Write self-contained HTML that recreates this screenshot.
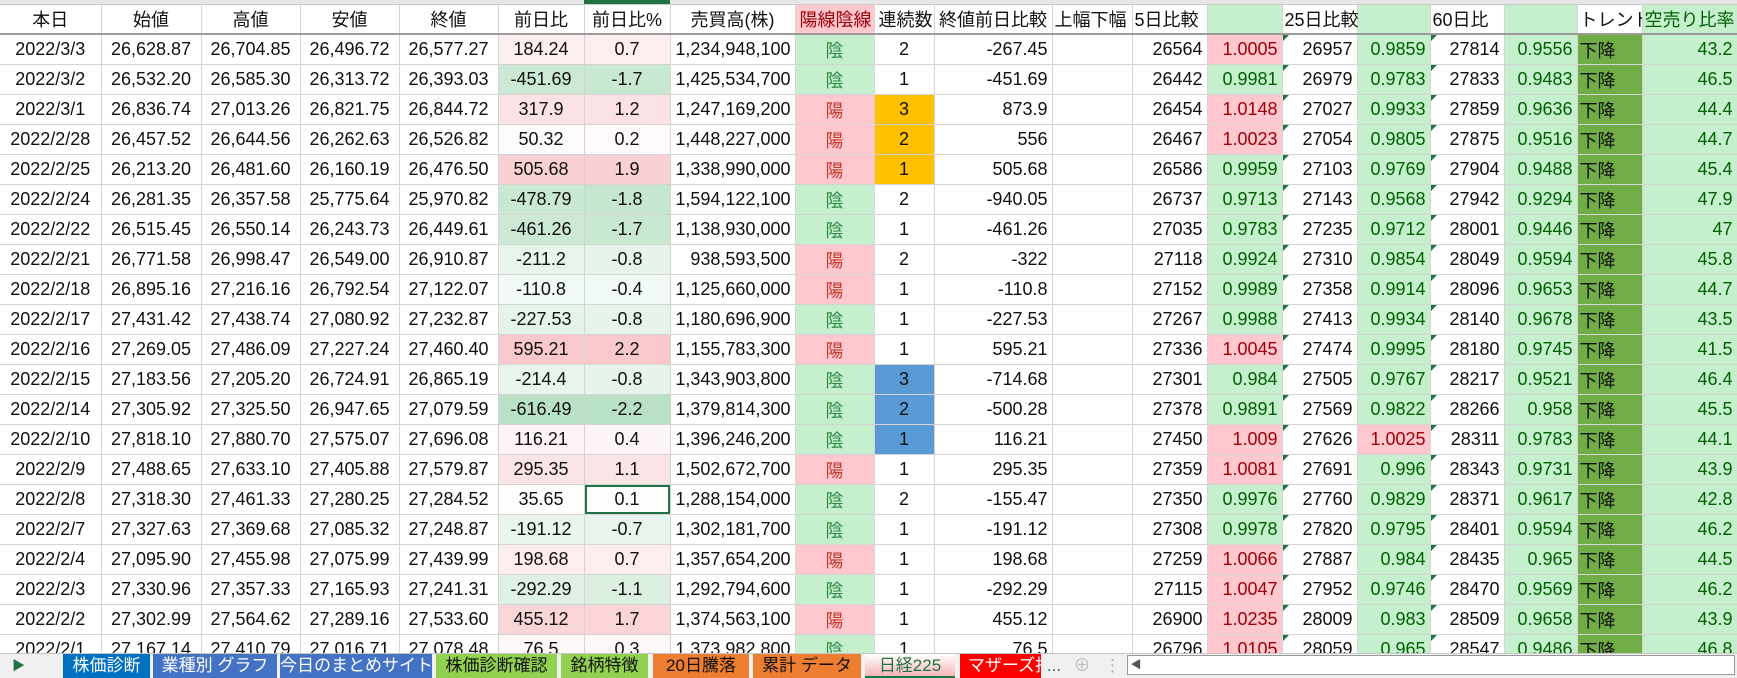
<!DOCTYPE html>
<html><head><meta charset="utf-8"><style>
body{margin:0;width:1737px;height:677px;overflow:hidden;background:#fff;font-family:"Liberation Sans","Noto Sans CJK JP",sans-serif;position:relative}
.strip{position:absolute;left:0;top:0;width:1737px;height:4px;background:#e6e6e6}
.strip i{position:absolute;top:0;left:584px;width:86px;height:4px;background:#217346}
table{position:absolute;left:0;top:4px;border-collapse:collapse;table-layout:fixed;width:1737px}
td{height:29px;border-right:1px solid #d4d4d4;border-bottom:1px solid #d4d4d4;padding:0 4px;font-size:18px;white-space:nowrap;overflow:hidden;color:#111;text-align:center;vertical-align:middle;position:relative}
tr.h td{font-size:18px;border-bottom:2px solid #9b9b9b;border-top:1px solid #c8c8c8;height:28px}
tr.h td:nth-child(n+12){text-align:left;padding-left:2px}
tr.h td:nth-child(14),tr.h td:nth-child(16),tr.h td:nth-child(18){background:#c6efce}
tr.h td:nth-child(9){background:#ffc7ce;color:#9c0006}
tr.h td:nth-child(20){background:#c6efce;color:#006100}
tr.d td:nth-child(8),tr.d td:nth-child(11),tr.d td:nth-child(n+13){text-align:right}
tr.d td:nth-child(14),tr.d td:nth-child(16),tr.d td:nth-child(18),tr.d td:nth-child(20){background:#c6efce;color:#006100}
tr.d td:nth-child(19){background:#70ad47;text-align:left;padding-left:2px;color:#111}
tr.d td:nth-child(15)::before,tr.d td:nth-child(17)::before{content:"";position:absolute;left:0;top:0;border-top:6px solid #217346;border-right:6px solid transparent}
td.p{background:#ffc7ce!important;color:#9c0006!important}
td.y{background:#ffc7ce;color:#c0392b}
td.n{background:#c6efce;color:#2e8b47}
td.o{background:#ffc000}
td.b{background:#5b9bd5}
td.sel{box-shadow:inset 0 0 0 2px #217346}
.tabs{position:absolute;left:0;top:653px;width:1737px;height:24px;background:#f0f0f0;border-top:1px solid #c6c6c6;font-size:17px}
.tabs span{position:absolute;top:0;height:24px;line-height:23px;text-align:center;white-space:nowrap;overflow:hidden}
.tb{background:#4472c4;color:#fff}
.tg{background:#92d050;color:#111}
.to{background:#ed7d31;color:#111}
</style></head><body>
<div class="strip"><i></i></div>
<table>
<colgroup><col style="width:101px"><col style="width:100px"><col style="width:99px"><col style="width:99px"><col style="width:99px"><col style="width:86px"><col style="width:86px"><col style="width:125px"><col style="width:79px"><col style="width:60px"><col style="width:118px"><col style="width:80px"><col style="width:75px"><col style="width:75px"><col style="width:75px"><col style="width:73px"><col style="width:74px"><col style="width:73px"><col style="width:65px"><col style="width:95px"></colgroup>
<tr class="h"><td>本日</td><td>始値</td><td>高値</td><td>安値</td><td>終値</td><td>前日比</td><td>前日比%</td><td>売買高(株)</td><td>陽線陰線</td><td>連続数</td><td>終値前日比較</td><td>上幅下幅</td><td>5日比較</td><td></td><td style="overflow:visible">25日比較</td><td></td><td>60日比</td><td></td><td>トレンド</td><td>空売り比率</td></tr>
<tr class="d"><td>2022/3/3</td><td>26,628.87</td><td>26,704.85</td><td>26,496.72</td><td>26,577.27</td><td style="background:rgb(253,238,239)">184.24</td><td style="background:rgb(253,237,239)">0.7</td><td>1,234,948,100</td><td class="n">陰</td><td>2</td><td>-267.45</td><td></td><td>26564</td><td class="p">1.0005</td><td>26957</td><td>0.9859</td><td>27814</td><td>0.9556</td><td>下降</td><td>43.2</td></tr>
<tr class="d"><td>2022/3/2</td><td>26,532.20</td><td>26,585.30</td><td>26,313.72</td><td>26,393.03</td><td style="background:rgb(204,233,213)">-451.69</td><td style="background:rgb(201,232,210)">-1.7</td><td>1,425,534,700</td><td class="n">陰</td><td>1</td><td>-451.69</td><td></td><td>26442</td><td>0.9981</td><td>26979</td><td>0.9783</td><td>27833</td><td>0.9483</td><td>下降</td><td>46.5</td></tr>
<tr class="d"><td>2022/3/1</td><td>26,836.74</td><td>27,013.26</td><td>26,821.75</td><td>26,844.72</td><td style="background:rgb(251,226,228)">317.9</td><td style="background:rgb(251,225,227)">1.2</td><td>1,247,169,200</td><td class="y">陽</td><td class="o">3</td><td>873.9</td><td></td><td>26454</td><td class="p">1.0148</td><td>27027</td><td>0.9933</td><td>27859</td><td>0.9636</td><td>下降</td><td>44.4</td></tr>
<tr class="d"><td>2022/2/28</td><td>26,457.52</td><td>26,644.56</td><td>26,262.63</td><td>26,526.82</td><td style="background:rgb(254,251,251)">50.32</td><td style="background:rgb(254,250,250)">0.2</td><td>1,448,227,000</td><td class="y">陽</td><td class="o">2</td><td>556</td><td></td><td>26467</td><td class="p">1.0023</td><td>27054</td><td>0.9805</td><td>27875</td><td>0.9516</td><td>下降</td><td>44.7</td></tr>
<tr class="d"><td>2022/2/25</td><td>26,213.20</td><td>26,481.60</td><td>26,160.19</td><td>26,476.50</td><td style="background:rgb(249,208,212)">505.68</td><td style="background:rgb(249,208,211)">1.9</td><td>1,338,990,000</td><td class="y">陽</td><td class="o">1</td><td>505.68</td><td></td><td>26586</td><td>0.9959</td><td>27103</td><td>0.9769</td><td>27904</td><td>0.9488</td><td>下降</td><td>45.4</td></tr>
<tr class="d"><td>2022/2/24</td><td>26,281.35</td><td>26,357.58</td><td>25,775.64</td><td>25,970.82</td><td style="background:rgb(200,232,210)">-478.79</td><td style="background:rgb(198,230,207)">-1.8</td><td>1,594,122,100</td><td class="n">陰</td><td>2</td><td>-940.05</td><td></td><td>26737</td><td>0.9713</td><td>27143</td><td>0.9568</td><td>27942</td><td>0.9294</td><td>下降</td><td>47.9</td></tr>
<tr class="d"><td>2022/2/22</td><td>26,515.45</td><td>26,550.14</td><td>26,243.73</td><td>26,449.61</td><td style="background:rgb(203,233,212)">-461.26</td><td style="background:rgb(201,232,210)">-1.7</td><td>1,138,930,000</td><td class="n">陰</td><td>1</td><td>-461.26</td><td></td><td>27035</td><td>0.9783</td><td>27235</td><td>0.9712</td><td>28001</td><td>0.9446</td><td>下降</td><td>47</td></tr>
<tr class="d"><td>2022/2/21</td><td>26,771.58</td><td>26,998.47</td><td>26,549.00</td><td>26,910.87</td><td style="background:rgb(231,245,235)">-211.2</td><td style="background:rgb(230,244,234)">-0.8</td><td>938,593,500</td><td class="y">陽</td><td>2</td><td>-322</td><td></td><td>27118</td><td>0.9924</td><td>27310</td><td>0.9854</td><td>28049</td><td>0.9594</td><td>下降</td><td>45.8</td></tr>
<tr class="d"><td>2022/2/18</td><td>26,895.16</td><td>27,216.16</td><td>26,792.54</td><td>27,122.07</td><td style="background:rgb(242,250,245)">-110.8</td><td style="background:rgb(242,250,245)">-0.4</td><td>1,125,660,000</td><td class="y">陽</td><td>1</td><td>-110.8</td><td></td><td>27152</td><td>0.9989</td><td>27358</td><td>0.9914</td><td>28096</td><td>0.9653</td><td>下降</td><td>44.7</td></tr>
<tr class="d"><td>2022/2/17</td><td>27,431.42</td><td>27,438.74</td><td>27,080.92</td><td>27,232.87</td><td style="background:rgb(229,244,234)">-227.53</td><td style="background:rgb(230,244,234)">-0.8</td><td>1,180,696,900</td><td class="n">陰</td><td>1</td><td>-227.53</td><td></td><td>27267</td><td>0.9988</td><td>27413</td><td>0.9934</td><td>28140</td><td>0.9678</td><td>下降</td><td>43.5</td></tr>
<tr class="d"><td>2022/2/16</td><td>27,269.05</td><td>27,486.09</td><td>27,227.24</td><td>27,460.40</td><td style="background:rgb(248,200,204)">595.21</td><td style="background:rgb(248,200,204)">2.2</td><td>1,155,783,300</td><td class="y">陽</td><td>1</td><td>595.21</td><td></td><td>27336</td><td class="p">1.0045</td><td>27474</td><td>0.9995</td><td>28180</td><td>0.9745</td><td>下降</td><td>41.5</td></tr>
<tr class="d"><td>2022/2/15</td><td>27,183.56</td><td>27,205.20</td><td>26,724.91</td><td>26,865.19</td><td style="background:rgb(231,245,235)">-214.4</td><td style="background:rgb(230,244,234)">-0.8</td><td>1,343,903,800</td><td class="n">陰</td><td class="b">3</td><td>-714.68</td><td></td><td>27301</td><td>0.984</td><td>27505</td><td>0.9767</td><td>28217</td><td>0.9521</td><td>下降</td><td>46.4</td></tr>
<tr class="d"><td>2022/2/14</td><td>27,305.92</td><td>27,325.50</td><td>26,947.65</td><td>27,079.59</td><td style="background:rgb(185,225,197)">-616.49</td><td style="background:rgb(185,225,197)">-2.2</td><td>1,379,814,300</td><td class="n">陰</td><td class="b">2</td><td>-500.28</td><td></td><td>27378</td><td>0.9891</td><td>27569</td><td>0.9822</td><td>28266</td><td>0.958</td><td>下降</td><td>45.5</td></tr>
<tr class="d"><td>2022/2/10</td><td>27,818.10</td><td>27,880.70</td><td>27,575.07</td><td>27,696.08</td><td style="background:rgb(254,244,245)">116.21</td><td style="background:rgb(254,245,246)">0.4</td><td>1,396,246,200</td><td class="n">陰</td><td class="b">1</td><td>116.21</td><td></td><td>27450</td><td class="p">1.009</td><td>27626</td><td class="p">1.0025</td><td>28311</td><td>0.9783</td><td>下降</td><td>44.1</td></tr>
<tr class="d"><td>2022/2/9</td><td>27,488.65</td><td>27,633.10</td><td>27,405.88</td><td>27,579.87</td><td style="background:rgb(251,228,230)">295.35</td><td style="background:rgb(251,228,230)">1.1</td><td>1,502,672,700</td><td class="y">陽</td><td>1</td><td>295.35</td><td></td><td>27359</td><td class="p">1.0081</td><td>27691</td><td>0.996</td><td>28343</td><td>0.9731</td><td>下降</td><td>43.9</td></tr>
<tr class="d"><td>2022/2/8</td><td>27,318.30</td><td>27,461.33</td><td>27,280.25</td><td>27,284.52</td><td style="background:rgb(255,252,252)">35.65</td><td class="sel" style="background:rgb(255,252,252)">0.1</td><td>1,288,154,000</td><td class="n">陰</td><td>2</td><td>-155.47</td><td></td><td>27350</td><td>0.9976</td><td>27760</td><td>0.9829</td><td>28371</td><td>0.9617</td><td>下降</td><td>42.8</td></tr>
<tr class="d"><td>2022/2/7</td><td>27,327.63</td><td>27,369.68</td><td>27,085.32</td><td>27,248.87</td><td style="background:rgb(233,246,237)">-191.12</td><td style="background:rgb(233,245,236)">-0.7</td><td>1,302,181,700</td><td class="n">陰</td><td>1</td><td>-191.12</td><td></td><td>27308</td><td>0.9978</td><td>27820</td><td>0.9795</td><td>28401</td><td>0.9594</td><td>下降</td><td>46.2</td></tr>
<tr class="d"><td>2022/2/4</td><td>27,095.90</td><td>27,455.98</td><td>27,075.99</td><td>27,439.99</td><td style="background:rgb(253,237,238)">198.68</td><td style="background:rgb(253,237,239)">0.7</td><td>1,357,654,200</td><td class="y">陽</td><td>1</td><td>198.68</td><td></td><td>27259</td><td class="p">1.0066</td><td>27887</td><td>0.984</td><td>28435</td><td>0.965</td><td>下降</td><td>44.5</td></tr>
<tr class="d"><td>2022/2/3</td><td>27,330.96</td><td>27,357.33</td><td>27,165.93</td><td>27,241.31</td><td style="background:rgb(222,241,228)">-292.29</td><td style="background:rgb(220,240,226)">-1.1</td><td>1,292,794,600</td><td class="n">陰</td><td>1</td><td>-292.29</td><td></td><td>27115</td><td class="p">1.0047</td><td>27952</td><td>0.9746</td><td>28470</td><td>0.9569</td><td>下降</td><td>46.2</td></tr>
<tr class="d"><td>2022/2/2</td><td>27,302.99</td><td>27,564.62</td><td>27,289.16</td><td>27,533.60</td><td style="background:rgb(250,213,216)">455.12</td><td style="background:rgb(250,213,216)">1.7</td><td>1,374,563,100</td><td class="y">陽</td><td>1</td><td>455.12</td><td></td><td>26900</td><td class="p">1.0235</td><td>28009</td><td>0.983</td><td>28509</td><td>0.9658</td><td>下降</td><td>43.9</td></tr>
<tr class="d"><td>2022/2/1</td><td>27,167.14</td><td>27,410.79</td><td>27,016.71</td><td>27,078.48</td><td style="background:rgb(254,248,248)">76.5</td><td style="background:rgb(254,247,248)">0.3</td><td>1,373,982,800</td><td class="n">陰</td><td>1</td><td>76.5</td><td></td><td>26796</td><td class="p">1.0105</td><td>28059</td><td>0.965</td><td>28547</td><td>0.9486</td><td>下降</td><td>46.8</td></tr>
</table>
<div class="tabs">
<span style="left:12px;width:12px;color:#217346;font-size:13px">&#9654;</span>
<span style="left:63px;width:87px;background:#0070c0;color:#fff">株価診断</span>
<span style="left:153px;width:124px" class="tb">業種別 グラフ</span>
<span style="left:280px;width:152px" class="tb">今日のまとめサイト</span>
<span style="left:436px;width:121px" class="tg">株価診断確認</span>
<span style="left:561px;width:87px" class="tg">銘柄特徴</span>
<span style="left:653px;width:96px" class="to">20日騰落</span>
<span style="left:753px;width:108px" class="to">累計 データ</span>
<span style="left:865px;width:90px;background:linear-gradient(#fff,#f6b5b5);color:#217346;border-bottom:2px solid #217346;height:22px">日経225</span>
<span style="left:960px;width:81px;background:#ff0000;color:#fff;text-align:left;padding-left:8px;box-sizing:border-box">マザーズ指</span>
<span style="left:1044px;width:20px;color:#217346">...</span>
<span style="left:1072px;width:20px;color:#bbb">&#8853;</span>
<span style="left:1104px;width:12px;color:#aaa">&#8942;</span>
<span style="left:1127px;width:608px;height:20px;top:1px;background:#fff;border:1px solid #999;box-sizing:border-box"></span>
<span style="left:1129px;width:14px;color:#555;font-size:11px">&#9664;</span>
</div>
</body></html>
